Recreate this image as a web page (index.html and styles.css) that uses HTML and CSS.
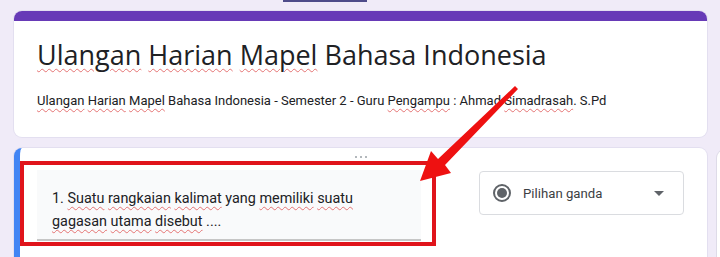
FILE: index.html
```html
<!DOCTYPE html>
<html lang="id">
<head>
<meta charset="utf-8">
<title>Ulangan Harian Mapel Bahasa Indonesia</title>
<link rel="stylesheet" href="styles.css">
</head>
<body>
<div class="topbar"><span class="tab-ind"></span></div>
<main class="page">
  <section class="card header-card">
    <div class="accent"></div>
    <div class="header-body">
      <h1 class="title"><span class="sp">Ulangan</span> <span class="sp">Harian</span> <span class="sp">Mapel</span> Bahasa Indonesia</h1>
      <p class="desc"><span class="sp">Ulangan</span> <span class="sp">Harian</span> <span class="sp">Mapel</span> Bahasa Indonesia - Semester 2 - Guru <span class="sp">Pengampu</span> : Ahmad <span class="sp">Simadrasah</span>. S.Pd</p>
    </div>
  </section>
  <section class="card q-card">
    <div class="drag"><i></i><i></i><i></i></div>
    <div class="q-row">
      <div class="q-input">
        <p class="q-text">1. <span class="sp">Suatu</span> <span class="sp">rangkaian</span> <span class="sp">kalimat</span> yang <span class="sp">memiliki</span> <span class="sp">suatu</span> <span class="sp">gagasan</span> <span class="sp">utama</span> <span class="sp">disebut</span> ....</p>
      </div>
      <div class="q-type">
        <svg class="radio" width="20" height="20" viewBox="0 0 20 20"><circle cx="10" cy="10" r="8" fill="none" stroke="#5f6368" stroke-width="2"/><circle cx="10" cy="10" r="5" fill="#5f6368"/></svg>
        <span class="q-type-label">Pilihan ganda</span>
        <svg class="caret" width="10" height="5" viewBox="0 0 10 5"><path d="M0 0h10L5 5z" fill="#5f6368"/></svg>
      </div>
    </div>
  </section>
</main>
<div class="toolbar"></div>
<div class="annot-box"></div>
<svg class="arrow" width="720" height="257" viewBox="0 0 720 257"><polygon points="515,86 518,89 445,165 451,173 420,181 431,151 438,159" fill="#ee1111"/></svg>
</body>
</html>
```
FILE: styles.css
```css
html, body {
  margin: 0;
  padding: 0;
}
body {
  background: #f0ebf8;
  width: 720px;
  height: 257px;
  overflow: hidden;
  position: relative;
  font-family: Roboto, "Liberation Sans", sans-serif;
}
.topbar {
  height: 11px;
  padding-left: 283px;
  box-sizing: border-box;
}
.tab-ind {
  display: block;
  width: 84px;
  height: 2px;
  background: #4e4b8a;
}
.page {
  padding-left: 14px;
  width: 693px;
}
.card {
  background: #fff;
  border-radius: 8px;
  box-shadow: 0 0 0 1px #e3dff0;
}
.header-card {
  height: 126px;
  overflow: hidden;
}
.accent {
  height: 10px;
  background: #673ab7;
}
.header-body {
  padding: 15px 23px 0 23px;
}
.title {
  margin: 0;
  font-family: "Open Sans", Roboto, sans-serif;
  font-weight: 400;
  font-size: 27px;
  line-height: 38px;
  color: #202124;
}
.desc {
  margin: 18px 0 0 0;
  font-size: 13px;
  line-height: 18px;
  color: #202124;
}
.sp {
  text-decoration: underline wavy #e57373;
  text-decoration-thickness: 1px;
  text-underline-offset: 3px;
}
.q-card {
  margin-top: 11px;
  height: 109px;
  border-left: 6px solid #4285f4;
  border-radius: 8px 8px 0 0;
}
.drag {
  display: flex;
  gap: 3px;
  padding-top: 8px;
  height: 2px;
  padding-left: 335px;
}
.drag i {
  width: 2px;
  height: 2px;
  background: #9aa0a6;
  border-radius: 50%;
}
.q-row {
  display: flex;
  padding: 12px 23px 0 17px;
  gap: 58px;
  align-items: flex-start;
}
.q-input {
  width: 384px;
  height: 69px;
  background: #f9fafb;
  border-bottom: 2px solid #c6c6c6;
}
.q-text {
  margin: 0;
  padding: 17px 20px 0 15px;
  font-family: Roboto, sans-serif;
  font-size: 14.4px;
  line-height: 23px;
  color: #202124;
}
.q-type {
  margin-top: 1px;
  width: 205px;
  height: 44px;
  box-sizing: border-box;
  border: 1px solid #dadce0;
  border-radius: 4px;
  display: flex;
  align-items: center;
  padding: 0 19px 0 12px;
}
.radio {
  flex: none;
}
.q-type-label {
  margin-left: 11px;
  flex: 1;
  font-size: 13.2px;
  color: #3c4043;
}
.caret {
  flex: none;
}
.toolbar {
  position: absolute;
  left: 717px;
  top: 150px;
  width: 20px;
  height: 107px;
  background: #fff;
  border-radius: 8px 0 0 0;
  box-shadow: 0 0 0 1px #dedbe8;
}
.annot-box {
  position: absolute;
  left: 20px;
  top: 161px;
  width: 416px;
  height: 85px;
  box-sizing: border-box;
  border: 4px solid #e0141b;
}
.arrow {
  position: absolute;
  left: 0;
  top: 0;
}
```
